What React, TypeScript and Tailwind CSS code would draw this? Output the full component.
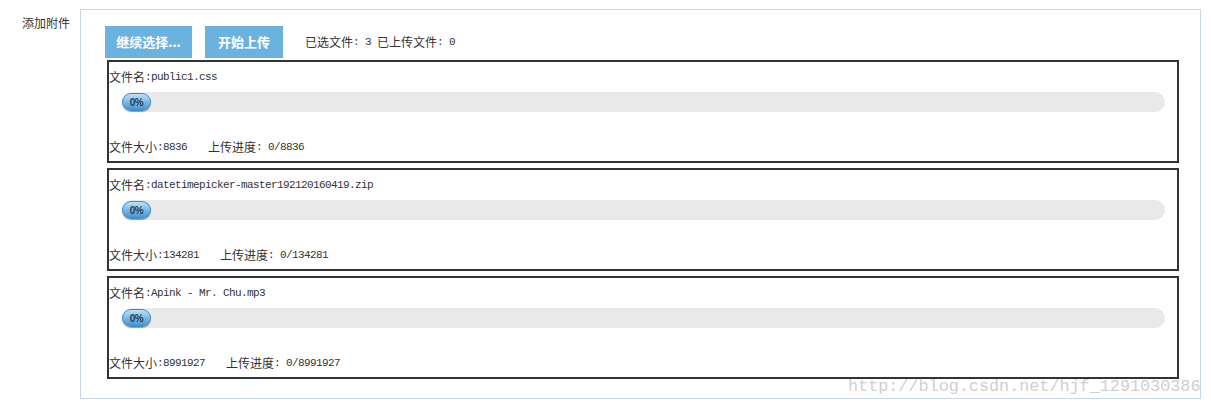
import React from "react";

const cjk = { fontFamily: '"Noto Sans CJK SC", "Noto Sans", sans-serif' };
const mono = { fontFamily: '"Liberation Mono", "DejaVu Sans Mono", monospace' };

type FileItem = { name: string; size: number };

const files: FileItem[] = [
  { name: "public1.css", size: 8836 },
  { name: "datetimepicker-master192120160419.zip", size: 134281 },
  { name: "Apink - Mr. Chu.mp3", size: 8991927 },
];

function Label({ children }: { children: React.ReactNode }) {
  return (
    <span className="text-[12px]" style={cjk}>
      {children}
    </span>
  );
}

function Mono({ children }: { children: React.ReactNode }) {
  return (
    <span className="text-[11px] tracking-[-0.6px] whitespace-pre" style={mono}>
      {children}
    </span>
  );
}

function FileRow({ file }: { file: FileItem }) {
  return (
    <div className="ml-[2px] border-2 border-[#333] bg-white text-[#333]">
      <div className="mt-[7px] h-[16px] leading-[16px] flex items-center">
        <Label>文件名</Label>
        <Mono>:{file.name}</Mono>
      </div>
      <div className="mt-[7px] ml-[13px] mr-[12px] h-[20px] rounded-full bg-[#e9e9e9] flex items-center">
        <div className="h-[18px] w-[29px] rounded-full border border-[#3f8ccb] bg-gradient-to-b from-[#bfe1f7] via-[#7ab9e6] to-[#3f92d4] shadow-[0_1px_1px_rgba(0,0,0,0.35)] flex items-center justify-center">
          <span
            className="text-[10px] font-bold text-[#2b3d4f] tracking-[-0.5px]"
            style={{ fontFamily: '"Liberation Sans", Arial, sans-serif' }}
          >
            0%
          </span>
        </div>
      </div>
      <div className="mt-[27px] mb-[6px] h-[16px] leading-[16px] flex items-center">
        <Label>文件大小</Label>
        <Mono>:{file.size}</Mono>
        <span className="w-[21px]" />
        <Label>上传进度</Label>
        <Mono>: 0/{file.size}</Mono>
      </div>
    </div>
  );
}

export default function App() {
  return (
    <div className="relative w-[1211px] h-[408px] bg-white overflow-hidden">
      <div className="flex">
        <div className="w-[80px] pl-[22px] pt-[14px] text-[12px] text-[#333]" style={cjk}>
          添加附件
        </div>
        <div className="mt-[9px] w-[1121px] h-[390px] border border-[#c9d6e3] pt-[16px] pl-[24px] pr-[21px]">
          <div className="flex items-center h-[32px]">
            <button
              className="h-[32px] w-[87px] bg-[#6cb2df] text-white text-[13px] font-bold"
              style={cjk}
            >
              继续选择...
            </button>
            <button
              className="ml-[13px] h-[32px] w-[78px] bg-[#6cb2df] text-white text-[13px] font-bold"
              style={cjk}
            >
              开始上传
            </button>
            <div className="ml-[22px] flex items-center text-[#333]">
              <Label>已选文件</Label>
              <Mono>: 3 </Mono>
              <Label>已上传文件</Label>
              <Mono>: 0</Mono>
            </div>
          </div>
          <div className="mt-[2px] flex flex-col gap-[5px]">
            {files.map((f) => (
              <FileRow key={f.name} file={f} />
            ))}
          </div>
        </div>
      </div>
      <div
        className="absolute left-[848px] top-[377px] text-[16.8px] leading-[20px] text-[#cfcfcf] whitespace-pre"
        style={mono}
      >
        http://blog.csdn.net/hjf_1291030386
      </div>
    </div>
  );
}
